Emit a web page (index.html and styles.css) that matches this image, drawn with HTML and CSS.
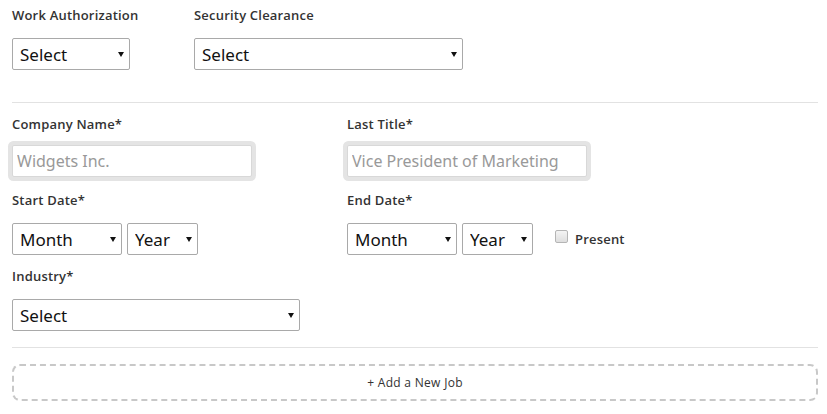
FILE: index.html
```html
<!DOCTYPE html>
<html lang="en">
<head>
    <meta charset="UTF-8">
    <title>Work History</title>
    <link rel="stylesheet" href="styles.css">
</head>
<body>
<div class="form">
    <div class="row top">
        <div class="field auth">
            <label>Work Authorization</label>
            <span class="select w-auth"><select><option>Select</option></select></span>
        </div>
        <div class="field">
            <label>Security Clearance</label>
            <span class="select w-clear"><select><option>Select</option></select></span>
        </div>
    </div>

    <hr>

    <div class="job">
        <div class="col">
            <label>Company Name*</label>
            <input type="text" class="text" placeholder="Widgets Inc.">
        </div>
        <div class="col">
            <label>Last Title*</label>
            <input type="text" class="text" placeholder="Vice President of Marketing">
        </div>

        <div class="col">
            <label>Start Date*</label>
            <div class="dates">
                <span class="select w-month"><select><option>Month</option></select></span>
                <span class="select w-year"><select><option>Year</option></select></span>
            </div>
        </div>
        <div class="col">
            <label>End Date*</label>
            <div class="dates">
                <span class="select w-month"><select><option>Month</option></select></span>
                <span class="select w-year"><select><option>Year</option></select></span>
                <label class="present"><input type="checkbox"> Present</label>
            </div>
        </div>

        <div class="col">
            <label>Industry*</label>
            <span class="select w-industry"><select><option>Select</option></select></span>
        </div>
    </div>

    <hr class="bottom">

    <button class="add-job">+ Add a New Job</button>
</div>
</body>
</html>
```

FILE: styles.css
```css
body {
    margin: 0;
    background-color: #fff;
    font-family: "Open Sans", Arial, sans-serif;
    color: #333;
}
.form {
    padding: 6px 9px 0 12px;
}
label {
    display: block;
    font-size: 13px;
    font-weight: 600;
    line-height: 18px;
    letter-spacing: 0.2px;
    color: #333;
    margin-bottom: 14px;
}
.row {
    display: flex;
}
.auth {
    width: 182px;
}
.select {
    position: relative;
    display: inline-block;
    height: 32px;
}
.select select {
    appearance: none;
    -webkit-appearance: none;
    width: 100%;
    height: 32px;
    border: 1px solid #a9a9a9;
    border-radius: 2px;
    background-color: #fff;
    font-family: "Noto Sans", Arial, sans-serif;
    font-size: 17px;
    color: #111;
    padding: 0 0 0 7px;
}
.select::after {
    content: "";
    position: absolute;
    right: 6px;
    top: 14px;
    border-left: 3px solid transparent;
    border-right: 3px solid transparent;
    border-top: 5px solid #111;
    pointer-events: none;
}
.w-auth { width: 118px; }
.w-clear { width: 269px; }
.w-month { width: 110px; }
.w-year { width: 71px; }
.w-industry { width: 288px; }
hr {
    border: 0;
    border-top: 1px solid #e2e2e2;
    margin: 32px 0 12px 0;
}
hr.bottom {
    margin: 16px 0 16px 0;
}
.job {
    display: grid;
    grid-template-columns: 335px 1fr;
}
.job .col > label {
    margin-bottom: 12px;
}
.text {
    display: block;
    box-sizing: border-box;
    width: 240px;
    height: 32px;
    margin-bottom: 14px;
    border: 1px solid #d8d8d8;
    border-radius: 2px;
    box-shadow: 0 0 0 4px #e4e4e4;
    font-family: "Noto Sans", Arial, sans-serif;
    font-size: 16px;
    padding: 0 4px;
}
.text::placeholder {
    color: #999;
}
.dates {
    display: flex;
    align-items: center;
    gap: 5px;
    margin-bottom: 12px;
}
.job .col:nth-child(3) > label,
.job .col:nth-child(4) > label,
.job .col:nth-child(5) > label {
    margin-bottom: 14px;
}
.present {
    display: flex;
    align-items: center;
    margin: 0 0 0 17px;
    font-size: 13px;
}
.present input {
    appearance: none;
    -webkit-appearance: none;
    width: 13px;
    height: 13px;
    margin: -6px 7px 0 0;
    border: 1px solid #b5b5b5;
    border-radius: 2px;
    background: linear-gradient(#f4f4f4, #dedede);
}
.add-job {
    display: block;
    width: 100%;
    height: 37px;
    border: 2px dashed #c8c8c8;
    border-radius: 8px;
    background: #fff;
    font-family: "Open Sans", Arial, sans-serif;
    font-size: 12px;
    color: #333;
    letter-spacing: 0.3px;
}
```
